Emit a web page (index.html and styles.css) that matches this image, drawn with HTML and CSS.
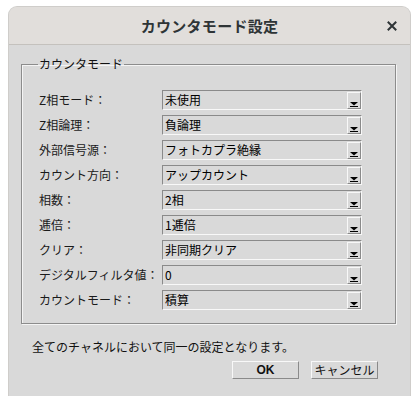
FILE: index.html
```html
<!DOCTYPE html>
<html lang="ja">
<head>
<meta charset="utf-8">
<link rel="stylesheet" href="styles.css">
</head>
<body>
<div class="dialog">
  <div class="titlebar">
    <div class="title">カウンタモード設定</div>
    <div class="close">
      <svg width="10" height="10" viewBox="0 0 10 10"><path d="M1.5 1.5 L8.5 8.5 M8.5 1.5 L1.5 8.5" stroke="#2e3436" stroke-width="2" stroke-linecap="square"/></svg>
    </div>
  </div>
  <div class="content">
    <fieldset class="group">
      <legend class="legend">カウンタモード</legend>
      <div class="rows">
        <div class="label">Z相モード：</div><div class="combo"><span class="val">未使用</span><span class="btn"><svg width="8" height="5" viewBox="0 0 8 5"><path d="M0 0 H8 L4 3.5 Z" fill="#000"/><rect x="0" y="4" width="8" height="1" fill="#000"/></svg></span></div>
        <div class="label">Z相論理：</div><div class="combo"><span class="val">負論理</span><span class="btn"><svg width="8" height="5" viewBox="0 0 8 5"><path d="M0 0 H8 L4 3.5 Z" fill="#000"/><rect x="0" y="4" width="8" height="1" fill="#000"/></svg></span></div>
        <div class="label">外部信号源：</div><div class="combo"><span class="val">フォトカプラ絶縁</span><span class="btn"><svg width="8" height="5" viewBox="0 0 8 5"><path d="M0 0 H8 L4 3.5 Z" fill="#000"/><rect x="0" y="4" width="8" height="1" fill="#000"/></svg></span></div>
        <div class="label">カウント方向：</div><div class="combo"><span class="val">アップカウント</span><span class="btn"><svg width="8" height="5" viewBox="0 0 8 5"><path d="M0 0 H8 L4 3.5 Z" fill="#000"/><rect x="0" y="4" width="8" height="1" fill="#000"/></svg></span></div>
        <div class="label">相数：</div><div class="combo"><span class="val">2相</span><span class="btn"><svg width="8" height="5" viewBox="0 0 8 5"><path d="M0 0 H8 L4 3.5 Z" fill="#000"/><rect x="0" y="4" width="8" height="1" fill="#000"/></svg></span></div>
        <div class="label">逓倍：</div><div class="combo"><span class="val">1逓倍</span><span class="btn"><svg width="8" height="5" viewBox="0 0 8 5"><path d="M0 0 H8 L4 3.5 Z" fill="#000"/><rect x="0" y="4" width="8" height="1" fill="#000"/></svg></span></div>
        <div class="label">クリア：</div><div class="combo"><span class="val">非同期クリア</span><span class="btn"><svg width="8" height="5" viewBox="0 0 8 5"><path d="M0 0 H8 L4 3.5 Z" fill="#000"/><rect x="0" y="4" width="8" height="1" fill="#000"/></svg></span></div>
        <div class="label">デジタルフィルタ値：</div><div class="combo"><span class="val">0</span><span class="btn"><svg width="8" height="5" viewBox="0 0 8 5"><path d="M0 0 H8 L4 3.5 Z" fill="#000"/><rect x="0" y="4" width="8" height="1" fill="#000"/></svg></span></div>
        <div class="label">カウントモード：</div><div class="combo"><span class="val">積算</span><span class="btn"><svg width="8" height="5" viewBox="0 0 8 5"><path d="M0 0 H8 L4 3.5 Z" fill="#000"/><rect x="0" y="4" width="8" height="1" fill="#000"/></svg></span></div>
      </div>
    </fieldset>
    <div class="note">全てのチャネルにおいて同一の設定となります。</div>
    <div class="buttons">
      <div class="button ok">OK</div>
      <div class="button cancel">キャンセル</div>
    </div>
  </div>
</div>
</body>
</html>
```
FILE: styles.css
```css
html, body {
  margin: 0;
  padding: 0;
  background: #ffffff;
}
body {
  font-family: "Noto Sans CJK JP", "Noto Sans", sans-serif;
  color: #1c1c1c;
}
.dialog {
  margin: 7px 0 0 9px;
  width: 401px;
  height: 389px;
  background: #d9d9d9;
  border-radius: 8px 8px 0 0;
  box-shadow: 0 0 0 1px #cfcdca;
  overflow: hidden;
}
.titlebar {
  height: 37px;
  background: #e1dedb;
  border-bottom: 1px solid #c4c1bd;
  display: flex;
  align-items: center;
  justify-content: center;
  position: relative;
}
.title {
  font-size: 15px;
  font-weight: bold;
  color: #2e3436;
  letter-spacing: 0.3px;
}
.close {
  position: absolute;
  right: 13px;
  top: 14px;
  width: 10px;
  height: 10px;
  display: flex;
}
.content {
  padding: 11px 10px 0 12px;
}
.group {
  margin: 0;
  width: 375px;
  height: 268px;
  box-sizing: border-box;
  border: 1px solid #8c8c8c;
  box-shadow: inset 1px 1px 0 #f4f4f4, 1px 1px 0 #f4f4f4;
  padding: 18px 0 0 17px;
}
.legend {
  padding: 0 1px;
  margin-left: -1px;
  font-size: 12px;
  line-height: 16px;
  color: #111;
}
.rows {
  display: grid;
  grid-template-columns: 123px 200px;
  grid-auto-rows: 20px;
  row-gap: 5px;
  align-items: center;
}
.label {
  font-size: 12px;
  line-height: 20px;
  color: #1a1a1a;
  white-space: nowrap;
}
.combo {
  height: 20px;
  box-sizing: border-box;
  border-top: 1px solid #8a8a8a;
  border-left: 1px solid #8a8a8a;
  border-bottom: 1px solid #f8f8f8;
  border-right: 1px solid #f8f8f8;
  display: flex;
  align-items: stretch;
}
.val {
  flex: 1;
  font-size: 12px;
  line-height: 18px;
  padding-left: 2px;
  color: #000;
  white-space: nowrap;
}
.btn {
  width: 14px;
  box-sizing: border-box;
  border-left: 1px solid #f8f8f8;
  border-top: 1px solid #f8f8f8;
  border-right: 1px solid #8a8a8a;
  border-bottom: 1px solid #8a8a8a;
  margin: 1px 0 0 0;
  display: flex;
  align-items: flex-end;
  justify-content: center;
  padding-bottom: 1px;
}
.note {
  margin: 15px 0 0 11px;
  font-size: 12px;
  line-height: 16px;
  color: #111;
}
.buttons {
  display: flex;
  justify-content: flex-end;
  gap: 12px;
  margin: 6px 22px 0 0;
}
.button {
  height: 18px;
  box-sizing: border-box;
  border-top: 1px solid #f8f8f8;
  border-left: 1px solid #f8f8f8;
  border-right: 1px solid #8a8a8a;
  border-bottom: 1px solid #8a8a8a;
  font-size: 12px;
  line-height: 16px;
  text-align: center;
  color: #111;
}
.ok {
  width: 67px;
  font-family: "Liberation Sans", "Noto Sans", sans-serif;
  font-weight: bold;
}
.cancel {
  width: 67px;
}
```
